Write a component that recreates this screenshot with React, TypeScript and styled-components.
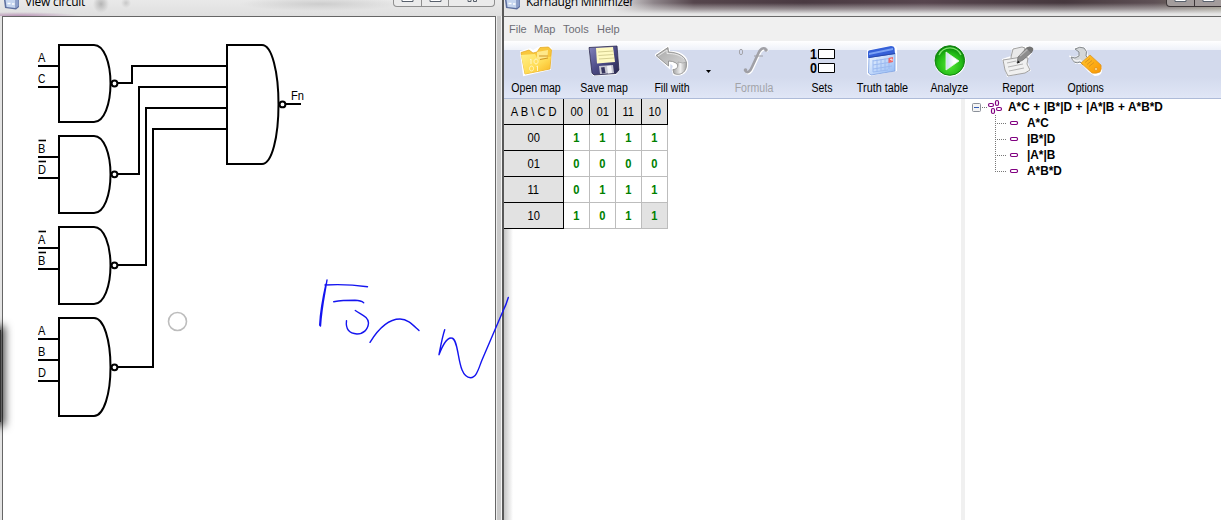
import React from "react";
import styled, { createGlobalStyle } from "styled-components";

const Global = createGlobalStyle`
  * { box-sizing: border-box; }
  html, body { margin: 0; padding: 0; overflow: hidden; }
  body { font-family: "Liberation Sans", Arial, sans-serif; font-size: 12px; color: #000; }
  svg { display: block; }
`;

const Desktop = styled.div`
  position: relative;
  display: flex;
  width: 1221px;
  height: 520px;
  overflow: hidden;
  background: #fff;
`;

const CircuitWindow = styled.section`
  display: flex;
  flex-direction: column;
  width: 502px;
  height: 520px;
  background: linear-gradient(90deg, #e4e4e4 0 496px, #ededed 496px 497px, #c9c9c9 497px 501px, #f4f4f4 501px);
`;

const TitleBar = styled.header<{ $dark?: boolean }>`
  display: flex;
  align-items: flex-start;
  height: 16px;
  flex: none;
  overflow: hidden;
  background: ${(p) =>
    p.$dark
      ? "linear-gradient(180deg, transparent 0 3px, rgba(225,225,225,.5) 9px, #e6e6e6 14px), linear-gradient(90deg, #e8e8e8 0 110px, #8d8489 150px, #55454c 190px, #4a3a42 300px, #57454e 420px, #46383e 560px, #5e5055 650px, #85806f)"
      : "radial-gradient(ellipse 8px 9px at 101px 4px, #b5b5b5, transparent), radial-gradient(ellipse 5px 5px at 126px 3px, #c8c8c8, transparent), radial-gradient(ellipse 80px 7px at 320px 4px, #cdcdcd, transparent), radial-gradient(ellipse 60px 4px at 20px 16px, #b993b6, transparent), linear-gradient(#e9e9e9, #dfdfdf)"};
`;

const TitleIcon = styled.span<{ $left: number }>`
  width: 17px;
  height: 10px;
  margin-left: ${(p) => p.$left}px;
`;

const Title = styled.h1`
  margin: -6px 0 0 4px;
  font: 400 12px/16px "Open Sans", "Noto Sans", sans-serif;
  letter-spacing: -0.28px;
  white-space: nowrap;
`;

const CaptionButtons = styled.div<{ $dark?: boolean }>`
  display: flex;
  margin-left: auto;
  margin-right: ${(p) => (p.$dark ? "-47px" : "7px")};
  height: 7px;
  border: 1px solid ${(p) => (p.$dark ? "#3c3537" : "#8f8f8f")};
  border-top: 0;
  border-radius: 0 0 4px 4px;
  color: ${(p) => (p.$dark ? "#3c3537" : "#8f8f8f")};
  background: ${(p) => (p.$dark ? "#a39c9c" : "#ebebeb")};
`;

const CaptionButton = styled.span<{ $wide?: boolean }>`
  display: flex;
  justify-content: center;
  width: ${(p) => (p.$wide ? 46 : 27)}px;
  & + & { border-left: 1px solid currentColor; }
`;

const Canvas = styled.div`
  width: 494px;
  flex: 1;
  margin-left: 2px;
  border: 1px solid #666;
  border-bottom: 0;
  background: #fff;
`;

const MapWindow = styled.section`
  display: flex;
  flex-direction: column;
  width: 719px;
  height: 520px;
  border-left: 2px solid #585858;
`;

const MenuBar = styled.nav`
  display: flex;
  gap: 9px;
  height: 25px;
  flex: none;
  padding: 5px 0 0 5px;
  border-top: 1px solid #686868;
  background: #f0f0f0;
  color: #6d6d75;
  line-height: 14px;
  font-size: 11px;
`;

const MenuItem = styled.span<{ $w: number }>`
  width: ${(p) => p.$w}px;
  white-space: nowrap;
`;

const ToolBar = styled.div`
  display: flex;
  height: 58px;
  flex: none;
  border-bottom: 1px solid #aebbd8;
  background: linear-gradient(180deg, #fff 0, #eef1f9 9px, #d3daed 9px, #d3daed 36px, #e0e6f6 57px);
`;

const Tool = styled.div<{ $w: number; $gap?: number; $disabled?: boolean }>`
  display: flex;
  flex-direction: column;
  align-items: center;
  width: ${(p) => p.$w}px;
  margin-left: ${(p) => p.$gap || 0}px;
  padding-top: 4px;
  color: ${(p) => (p.$disabled ? "#a2a3a8" : "#000")};
`;

const Label = styled.span<{ $scale?: number }>`
  line-height: 14px;
  margin-top: 4px;
  white-space: nowrap;
  transform: scaleX(${(p) => p.$scale || 0.88});
`;

const DropArrow = styled.span`
  width: 9px;
  padding: 29px 0 0 1px;
`;

const Workspace = styled.main`
  display: flex;
  flex: 1;
  background: linear-gradient(90deg, #c6c6c6, #fff 9px);
`;

const MapPane = styled.div`
  width: 457px;
`;

const KMap = styled.div`
  display: grid;
  grid-template-columns: 60px repeat(4, 26px);
  grid-auto-rows: 26px;
  width: 164px;
`;

const Cell = styled.div<{ $head?: boolean; $active?: boolean }>`
  display: flex;
  align-items: center;
  justify-content: center;
  border-right: 1px solid ${(p) => (p.$head ? "#000" : "#bdbdbd")};
  border-bottom: 1px solid ${(p) => (p.$head ? "#000" : "#bdbdbd")};
  background: ${(p) => (p.$head || p.$active ? "#e2e2e2" : "#fff")};
  color: ${(p) => (p.$head ? "#000" : "#008000")};
  font-weight: ${(p) => (p.$head ? 400 : 700)};
  padding-top: 1px;
  white-space: pre;
`;

const CellText = styled.span`
  transform: scaleX(0.93);
`;

const Splitter = styled.div`
  width: 4px;
  background: #f0f0f0;
`;

const Tree = styled.div`
  flex: 1;
  display: flex;
  padding-left: 7px;
`;

const TreeRows = styled.div`
  margin-left: -19px;
`;

const TreeRow = styled.div<{ $child?: boolean }>`
  height: 16px;
  line-height: 16px;
  padding-left: ${(p) => (p.$child ? 19 : 0)}px;
  font-weight: 700;
  white-space: nowrap;
  word-spacing: 0.3px;
  transform: scaleX(0.985);
  transform-origin: ${(p) => (p.$child ? 19 : 0)}px 0;
`;

const Ink = styled.svg`
  position: absolute;
  left: 0;
  top: 0;
  pointer-events: none;
`;

const EdgeShadow = styled.div`
  position: absolute;
  left: -8px;
  top: 330px;
  width: 9px;
  height: 92px;
  background: #333;
  box-shadow: 0 0 9px 4px rgba(0, 0, 0, 0.72);
`;

const WindowGlyph = () => (
  <svg width="17" height="10" viewBox="0 0 17 10">
    <path d="M0 0 L1 8 L12 9.5 L15 7 V0Z" fill="#5d6f9f" />
    <path d="M1.500 0 L2.500 7 L11.500 8 V0Z" fill="#c5d5ef" />
    <path d="M12 0 V8 L14.500 6 V0Z" fill="#8c9fca" />
    <path d="M3.500 3.500H6.500M8 4H10.500" stroke="#fff" strokeWidth="1.500" />
  </svg>
);

const SmallBox = () => (
  <svg width="13" height="4" viewBox="0 0 13 4">
    <path d="M1 0 V1.5 H12 V0" fill="#fff" stroke="#58606c" />
  </svg>
);

const CloseGlyph = () => (
  <svg width="13" height="4" viewBox="0 0 13 4">
    <path d="M3 0 V1.5 H6 V0 M8.5 0 V1.5 H11.5 V0" fill="none" stroke="#58606c" />
  </svg>
);

type GateSpec = { x: number; y: number; h: number; bubble: number };

const Gate = ({ x, y, h, bubble }: GateSpec) => (
  <g>
    <path d={`M${x + 35} ${y} H${x} V${y + h} H${x + 35} C${x + 45} ${y + h} ${x + 51.5} ${y + h * 0.77} ${x + 51.5} ${y + h / 2} C${x + 51.5} ${y + h * 0.23} ${x + 45} ${y} ${x + 35} ${y}Z`} />
    <circle cx={x + 55.5} cy={bubble} r="2.9" />
  </g>
);

const Input = ({ y, name, bar }: { y: number; name: string; bar?: boolean }) => (
  <g>
    <path d={`M38 ${y} H59`} />
    {bar && <path d={`M38.5 ${y - 16.5} H46`} strokeWidth="1.6" />}
    <text x="38" y={y - 4} fill="#000" stroke="none" fontSize="12" textLength={name === "D" ? 8 : 7.4} lengthAdjust="spacingAndGlyphs">
      {name}
    </text>
  </g>
);

const inputs = [
  { y: 66, name: "A" },
  { y: 87, name: "C" },
  { y: 157, name: "B", bar: true },
  { y: 178, name: "D", bar: true },
  { y: 248, name: "A", bar: true },
  { y: 269, name: "B", bar: true },
  { y: 339, name: "A" },
  { y: 360, name: "B" },
  { y: 381, name: "D" },
];

const Circuit = () => (
  <svg width="492" height="503" viewBox="3 17 492 503" fill="none" stroke="#000" strokeWidth="2">
    {inputs.map((i) => (
      <Input key={i.y} {...i} />
    ))}
    <Gate x={59} y={45} h={77} bubble={83.5} />
    <Gate x={59} y={136} h={77} bubble={174.3} />
    <Gate x={59} y={227} h={77} bubble={265.3} />
    <Gate x={59} y={318} h={98} bubble={367.3} />
    <Gate x={227} y={45} h={119} bubble={104.4} />
    <path d="M118 83H132V66H227M118 174H139V87H227M118 265H146V108H227M118 367H153V129H227M286 104H301" />
    <text x="291" y="100" fill="#000" stroke="none" fontSize="12" textLength="13" lengthAdjust="spacingAndGlyphs">
      Fn
    </text>
    <circle cx="177.5" cy="321.5" r="9" stroke="#bdbdbd" strokeWidth="1.6" />
  </svg>
);

const FolderIcon = () => (
  <svg width="32" height="32" viewBox="0 0 32 32">
    <defs>
      <linearGradient id="fold" x1="0" y1="0" x2="1" y2="1">
        <stop offset="0" stopColor="#fff08a" />
        <stop offset=".55" stopColor="#ffdc55" />
        <stop offset="1" stopColor="#f8b21c" />
      </linearGradient>
    </defs>
    <path d="M1 7L10 4L13 6L20 2L29 1L31 4L30 24L4 30Z" fill="#fff" stroke="#fff" strokeWidth="2" />
    <path d="M1 7.500L9 5L13 8L17 7L20 2.500L28.500 2L31.500 5L30 24L5 29Z" fill="#f9c73c" stroke="#dfa31e" strokeWidth=".7" />
    <path d="M17 7L28 5L27 20L17 21Z" fill="#ffe88a" />
    <path d="M1 10L15 9L18 14.500L31 11.500L29 24L5 29Z" fill="url(#fold)" />
    <path d="M19 11H28M20 14.500L28 13" stroke="#cf9526" />
    <path d="M10 15L11 14V19M16 14a2 2.500 0 1 0 .1 0M11.500 21a2 2.500 0 1 0 .1 0M16.500 21.500L17.500 21V26" fill="none" stroke="#fff6c4" />
  </svg>
);

const FloppyIcon = () => (
  <svg width="32" height="32" viewBox="0 0 32 32">
    <defs>
      <linearGradient id="flop" x1="0" y1="0" x2="1" y2="1">
        <stop offset="0" stopColor="#8585bd" />
        <stop offset=".5" stopColor="#4c4b86" />
        <stop offset="1" stopColor="#29284c" />
      </linearGradient>
    </defs>
    <path d="M0 2L29 0L32 25L28 30L5 31Z" fill="#fff" />
    <path d="M1 2.500 L29 1 L31 25 L28 28.500 L6 30 L4 28Z" fill="url(#flop)" stroke="#29284c" strokeWidth=".8" />
    <path d="M8 3 L25 2 L27 17 L9 18.500Z" fill="#fffac2" />
    <path d="M10 7L25 6M10.500 10.500L25.500 9.500M11 14L26 13" stroke="#d5cf92" />
    <path d="M11 21 L25 20 L26 28 L12 29Z" fill="#c9c9d3" />
    <path d="M13 22.500L16.500 22L17.500 28L14 28.500Z" fill="#383660" />
    <path d="M19 21L23 20.500L24 28L20 28.500Z" fill="#f3f3f7" />
  </svg>
);

const UndoIcon = () => (
  <svg width="34" height="32" viewBox="0 0 34 32">
    <defs>
      <linearGradient id="undo" x1="0" y1="0" x2="1" y2="1">
        <stop offset="0" stopColor="#a8a8a8" />
        <stop offset="1" stopColor="#dedede" />
      </linearGradient>
      <linearGradient id="curl">
        <stop offset="0" stopColor="#a2a2a2" />
        <stop offset=".55" stopColor="#f0f0f0" />
        <stop offset="1" stopColor="#a5a5a5" />
      </linearGradient>
    </defs>
    <path d="M1 10L13 2L14 7C24 7 32 11 32 19C32 27 27 31 19 29L18 24C20 21 19 19 14 17V22Z" fill="#fff" stroke="#fff" strokeWidth="2.500" />
    <path d="M1 10.500L13 2.500L13.500 7C24 7.500 31.500 12 31.500 19C31.500 27 26 31 19 28.500L18 24.500C23 25 24 20 21 18Q18 16 13.500 16V21Z" fill="url(#undo)" stroke="#868686" strokeWidth=".8" />
    <path d="M31.500 17C32 27 26 31 19 28.500L18 24.500C22 24.500 23.500 22 23 17Q28 19 31.500 17Z" fill="url(#curl)" stroke="#969696" strokeWidth=".6" />
    <path d="M3 11L12 5V8.500C20 8.500 25 10 29 14" fill="none" stroke="#e7e7e7" />
  </svg>
);

const FormulaIcon = () => (
  <svg width="32" height="32" viewBox="0 0 32 32" fill="none">
    <path d="M29 5C25 2 22 4 20 9L14 22C12 27 9 29 7 25" stroke="#fff" strokeWidth="2.500" transform="translate(1 1)" />
    <ellipse cx="3" cy="7" rx="1.600" ry="2.800" stroke="#a4a4aa" />
    <path d="M28 4C25 2 22 4 20 9L14 22C12 27 9 29 7 25" stroke="#a0a0a6" strokeWidth="2.600" />
    <path d="M16 11H25" stroke="#a0a0a6" />
    <circle cx="28" cy="5" r="1.800" fill="#a0a0a6" />
    <circle cx="7.500" cy="25" r="1.800" fill="#a0a0a6" />
  </svg>
);

const SetsIcon = () => (
  <svg width="28" height="32" viewBox="0 0 28 32">
    <g fontSize="14" fontWeight="700">
      <text x="2" y="14" textLength="7" lengthAdjust="spacingAndGlyphs">1</text>
      <text x="2" y="28" textLength="7" lengthAdjust="spacingAndGlyphs">0</text>
    </g>
    <path d="M10.500 4.500h16v9h-16zM10.500 18.500h16v9h-16z" fill="#fff" stroke="#000" />
  </svg>
);

const CalendarIcon = () => (
  <svg width="32" height="32" viewBox="0 0 32 32">
    <defs>
      <linearGradient id="cal" x1="0" y1="0" x2="1" y2="1">
        <stop offset="0" stopColor="#f5faff" />
        <stop offset="1" stopColor="#8fb7f5" />
      </linearGradient>
    </defs>
    <path d="M1 5L28 0L31 3V26L4 31L1 29Z" fill="#fff" />
    <path d="M3 12L29 8V26L5 30L2.500 28Z" fill="url(#cal)" stroke="#7c9ee0" strokeWidth=".8" />
    <path d="M2 7Q2 5 5 5L25 1Q28 1 28.500 3L29 9L2 13Z" fill="#3560d8" />
    <path d="M3 8L27 3V5L3 10Z" fill="#7ba2f5" />
    <path d="M3 12.500L29 8.500" stroke="#2748a9" />
    <path d="M7 16L26 13M7 20L26 17M7 24L26 21M7 27L22 25M7 15V27M11 14.500V27M15 14V26M19 13.500V26M23 13V24" stroke="#9cbaf0" />
    <path d="M22.500 13L27 12V17L22.500 18Z" fill="#f06b6b" />
    <path d="M24 14.500L26 14V16" stroke="#fff" fill="none" strokeWidth=".8" />
  </svg>
);

const AnalyzeIcon = () => (
  <svg width="32" height="32" viewBox="0 0 32 32">
    <defs>
      <radialGradient id="run" cx=".5" cy=".65" r=".6">
        <stop offset="0" stopColor="#54e637" />
        <stop offset=".65" stopColor="#24bd16" />
        <stop offset="1" stopColor="#09840a" />
      </radialGradient>
      <linearGradient id="play">
        <stop offset="0" stopColor="#c7d9ee" />
        <stop offset=".6" stopColor="#fff" />
      </linearGradient>
    </defs>
    <circle cx="16" cy="16" r="15.700" fill="#fff" />
    <circle cx="15.800" cy="15.500" r="14.800" fill="url(#run)" stroke="#138512" strokeWidth="1" />
    <path d="M5 10A12 12 0 0 1 27 10" fill="none" stroke="#82e56f" strokeWidth="1.300" />
    <path d="M12 7L25 16L12 25Z" fill="url(#play)" stroke="#e6f7e5" strokeWidth=".8" />
  </svg>
);

const ReportIcon = () => (
  <svg width="32" height="32" viewBox="0 0 32 32">
    <path d="M0 14L9 11L10 3L23 1L31 2L30 8L25 15L29 26L5 32Z" fill="#fff" />
    <path d="M9 12L11 4L20 2L23 3L21 15L10 18Z" fill="#e9e9e9" stroke="#a0a0a0" />
    <path d="M1 15L20 12L26 13L25 19L28 25L23 28L6 31L3 25Z" fill="#f0f0f0" stroke="#a2a2a2" />
    <path d="M5 18L14 16M6 22L21 19M7 26L22 23" stroke="#b5b5b5" />
    <path d="M15 18L16 12L25 2.500L30 7L21 15Z" fill="#8d8d8d" stroke="#6a6a6a" strokeWidth=".7" />
    <path d="M18 11L26 4" stroke="#b5b5b5" strokeWidth="1.500" />
    <path d="M24 3Q28 0 31 3Q32 6 29 8Z" fill="#737373" />
    <path d="M15 18.500L16 15.500L18 17.500Z" fill="#111" />
  </svg>
);

const OptionsIcon = () => (
  <svg width="34" height="32" viewBox="0 0 34 32">
    <defs>
      <linearGradient id="grip" x1="0" y1="0" x2="1" y2="1">
        <stop offset="0" stopColor="#ffc62e" />
        <stop offset="1" stopColor="#fb9600" />
      </linearGradient>
    </defs>
    <path d="M2 12L6 13L11 10V6L7 3L13 2L17 5L18 11L32 23Q33 30 26 30L20 26L13 18L7 18Z" fill="#fff" stroke="#fff" strokeWidth="2" />
    <path d="M2 12L6 13L10 11V7L6 4Q11 1 15 3Q19 6 17 11L20 14L14 20L11 17Q5 20 2 12Z" fill="#d4d7d9" stroke="#858a8e" />
    <path d="M4 14Q7 17 11 15L15 18" fill="none" stroke="#f3f3f3" strokeWidth="1.300" />
    <path d="M21 10L32 20Q33 24 31 27Q27 29 23 28L12 18Z" fill="url(#grip)" stroke="#d98f1f" strokeWidth=".7" />
    <path d="M16 17.500L21 13.500M18 19.500L23 15.500M20 21.500L25 17.500" stroke="#d99520" />
    <circle cx="27" cy="24" r="1.500" fill="#ffe29a" stroke="#e08a10" strokeWidth=".7" />
  </svg>
);

const TreeLines = () => (
  <svg width="55" height="80" viewBox="972 99 55 80" fill="none">
    <rect x="972.5" y="103.500" width="8" height="8" rx="1" fill="#f4f4f4" stroke="#8b9099" />
    <path d="M974 107.500H979" stroke="#345cb4" />
    <path d="M982 107.500H988M995.500 115V171M997 123.500H1006M997 139.500H1006M997 155.500H1006M995 171.500H1006" stroke="#777" strokeDasharray="1 1" />
    <g stroke="#800080" strokeWidth="1.200">
      <rect x="995.500" y="100.500" width="3" height="5" rx="1.500" />
      <rect x="988.500" y="103.500" width="5" height="3" rx="1.500" />
      <rect x="996.500" y="107.500" width="5" height="3" rx="1.500" />
      <rect x="991.500" y="108.500" width="3" height="5" rx="1.500" />
      {[121.5, 137.5, 153.5, 169.5].map((y) => (
        <rect key={y} x="1010.500" y={y} width="7" height="3" rx="1.200" />
      ))}
    </g>
  </svg>
);

const codes = ["00", "01", "11", "10"];
const values = ["1111", "0000", "0111", "1011"];

export default function App() {
  return (
    <Desktop>
      <Global />
      <CircuitWindow>
        <TitleBar>
          <TitleIcon $left={4}><WindowGlyph /></TitleIcon>
          <Title>View circuit</Title>
          <CaptionButtons>
            <CaptionButton><SmallBox /></CaptionButton>
            <CaptionButton><SmallBox /></CaptionButton>
            <CaptionButton $wide><CloseGlyph /></CaptionButton>
          </CaptionButtons>
        </TitleBar>
        <Canvas><Circuit /></Canvas>
      </CircuitWindow>

      <MapWindow>
        <TitleBar $dark>
          <TitleIcon $left={1}><WindowGlyph /></TitleIcon>
          <Title>Karnaugh Minimizer</Title>
          <CaptionButtons $dark>
            <CaptionButton><SmallBox /></CaptionButton>
            <CaptionButton><SmallBox /></CaptionButton>
            <CaptionButton $wide><CloseGlyph /></CaptionButton>
          </CaptionButtons>
        </TitleBar>
        <MenuBar>
          <MenuItem $w={16}>File</MenuItem>
          <MenuItem $w={20}>Map</MenuItem>
          <MenuItem $w={25}>Tools</MenuItem>
          <MenuItem $w={22}>Help</MenuItem>
        </MenuBar>
        <ToolBar>
          <Tool $w={64}><FolderIcon /><Label>Open map</Label></Tool>
          <Tool $w={72}><FloppyIcon /><Label>Save map</Label></Tool>
          <Tool $w={64}><UndoIcon /><Label>Fill with</Label></Tool>
          <DropArrow>
            <svg width="7" height="4" viewBox="0 0 7 4"><path d="M1 0H6L3.500 3Z" /></svg>
          </DropArrow>
          <Tool $w={64} $gap={9} $disabled><FormulaIcon /><Label>Formula</Label></Tool>
          <Tool $w={52} $gap={10}><SetsIcon /><Label>Sets</Label></Tool>
          <Tool $w={68}><CalendarIcon /><Label $scale={0.9}>Truth table</Label></Tool>
          <Tool $w={67}><AnalyzeIcon /><Label>Analyze</Label></Tool>
          <Tool $w={70}><ReportIcon /><Label>Report</Label></Tool>
          <Tool $w={66}><OptionsIcon /><Label>Options</Label></Tool>
        </ToolBar>
        <Workspace>
          <MapPane>
            <KMap>
              <Cell $head><CellText>A B \ C D</CellText></Cell>
              {codes.map((c) => <Cell key={c} $head><CellText>{c}</CellText></Cell>)}
              {codes.map((c, r) => (
                <React.Fragment key={c}>
                  <Cell $head><CellText>{c}</CellText></Cell>
                  {values[r].split("").map((v, i) => (
                    <Cell key={i} $active={r === 3 && i === 3}><CellText>{v}</CellText></Cell>
                  ))}
                </React.Fragment>
              ))}
            </KMap>
          </MapPane>
          <Splitter />
          <Tree>
            <TreeLines />
            <TreeRows>
              <TreeRow>A*C + |B*|D + |A*|B + A*B*D</TreeRow>
              <TreeRow $child>A*C</TreeRow>
              <TreeRow $child>|B*|D</TreeRow>
              <TreeRow $child>|A*|B</TreeRow>
              <TreeRow $child>A*B*D</TreeRow>
            </TreeRows>
          </Tree>
        </Workspace>
      </MapWindow>

      <EdgeShadow />
      <Ink width="520" height="400" viewBox="0 0 520 400" fill="none" stroke="#1414f0" strokeWidth="1.400" strokeLinecap="round" strokeLinejoin="round">
        <path d="M327 280C325 293 321.500 308 320.500 326L319.700 325C320.500 310 323.500 295 326 284M325 285C341 284 355 285 367.500 286.700" />
        <path d="M333.700 301.700C341 300.500 348 300.300 355 300.300Q361 300.500 363.700 302.700" />
        <path d="M355.300 310.500C362 315 368.500 317 368.500 323C368 330 363 334 357 334C349 333.500 345.500 329 346.500 320.700" />
        <path d="M370 342.300C377 331 388 319 400 319C408 319 413 325 419 330.500" />
        <path d="M444.700 329.700C442 338 440.500 347 439 354.700C442 347 446 337.500 451.500 338C455 338 456.500 345 458 353C460 364 462 377.500 470.500 377.700C477 377.500 479 367 482 360L503 311C505 307 507 302 508.300 297.500" />
      </Ink>
    </Desktop>
  );
}
